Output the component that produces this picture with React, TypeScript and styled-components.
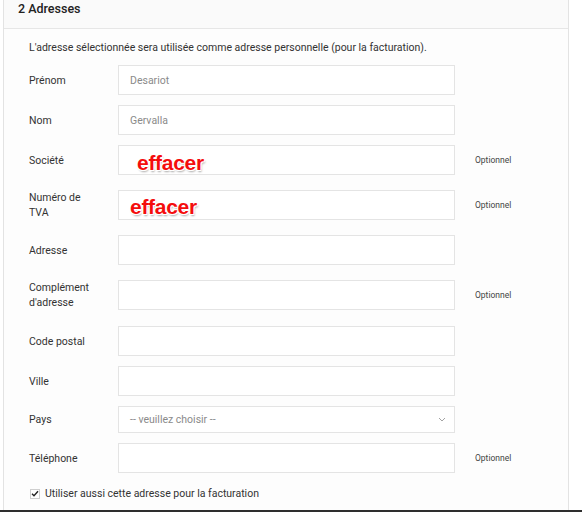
import React from "react";
import styled, { createGlobalStyle } from "styled-components";

const GlobalStyle = createGlobalStyle`
  html, body {
    margin: 0;
    padding: 0;
    background: #ffffff;
  }
  body {
    font-family: Roboto, "Liberation Sans", Arial, sans-serif;
    color: #333;
  }
`;

const Page = styled.div`
  width: 582px;
  height: 512px;
  display: flex;
  flex-direction: column;
  overflow: hidden;
`;

const Panel = styled.section`
  margin-left: 3px;
  width: 564px;
  height: 510px;
  border-left: 1px solid #e3e3e3;
  border-right: 1px solid #e3e3e3;
  background: #fdfdfd;
  display: flex;
  flex-direction: column;
`;

const Header = styled.div`
  height: 29px;
  box-sizing: border-box;
  padding: 2px 14px 0;
  border-bottom: 1px solid #e6e6e6;
  background: #fafafa;
  font-size: 12.5px;
  line-height: 13px;
  font-weight: 500;
  color: #222;
`;

const Body = styled.div`
  padding: 12px 0 0 25px;
  display: flex;
  flex-direction: column;
`;

const Intro = styled.p`
  margin: 0 0 10px;
  font-size: 10.5px;
  line-height: 14px;
  color: #333;
`;

const Row = styled.div<{ $tall?: boolean }>`
  display: flex;
  align-items: center;
  margin-bottom: ${(p) => (p.$tall ? 11 : 10)}px;
`;

const Label = styled.label`
  width: 89px;
  padding: 5px 0;
  font-size: 10.5px;
  line-height: 15px;
  color: #333;
`;

const Field = styled.div<{ $h?: number }>`
  position: relative;
  width: 337px;
  height: ${(p) => p.$h ?? 30}px;
  box-sizing: border-box;
  border: 1px solid #e4e4e4;
  background: #fff;
  display: flex;
  align-items: center;
  padding: 0 11px;
  font-size: 10.5px;
  color: #8a8a8a;
`;

const Chevron = styled.svg`
  margin-left: auto;
  margin-right: -3px;
`;

const Optional = styled.span`
  margin-left: 20px;
  font-size: 8.5px;
  color: #444;
`;

const Scribble = styled.span<{ $x: number; $dy: number }>`
  position: absolute;
  left: ${(p) => p.$x}px;
  top: 50%;
  transform: translateY(calc(-50% + ${(p) => p.$dy}px));
  font-family: "Liberation Sans", Arial, sans-serif;
  font-weight: 700;
  font-size: 21px;
  line-height: 22px;
  color: #f40d0d;
  letter-spacing: -0.3px;
  text-shadow: 1px 1px 0 #fff, -1px -1px 0 #fff, 1px -1px 0 #fff,
    -1px 1px 0 #fff, 1px 2px 2px rgba(0, 0, 0, 0.35);
`;

const CheckRow = styled.label`
  display: flex;
  align-items: center;
  gap: 5px;
  margin-top: 4px;
  margin-left: 1px;
  font-size: 10.5px;
  color: #333;
`;

const Box = styled.span`
  width: 10px;
  height: 10px;
  box-sizing: border-box;
  border: 1px solid #cfcfcf;
  background: #fff;
  display: flex;
  align-items: center;
  justify-content: center;
`;

const BottomBar = styled.div`
  height: 2px;
  background: #2e2e2e;
`;

type FieldDef = {
  label: React.ReactNode;
  value?: string;
  optional?: boolean;
  tall?: boolean;
  scribble?: [number, number];
};

const fields: FieldDef[] = [
  { label: "Prénom", value: "Desariot" },
  { label: "Nom", value: "Gervalla" },
  { label: "Société", optional: true, scribble: [18, 3] },
  {
    label: (
      <>
        Numéro de
        <br />
        TVA
      </>
    ),
    optional: true,
    scribble: [11, 2],
  },
  { label: "Adresse" },
  {
    label: (
      <>
        Complément
        <br />
        d'adresse
      </>
    ),
    optional: true,
    tall: true,
  },
  { label: "Code postal" },
  { label: "Ville" },
];

export default function App() {
  return (
    <Page>
      <GlobalStyle />
      <Panel>
        <Header>2 Adresses</Header>
        <Body>
          <Intro>
            L'adresse sélectionnée sera utilisée comme adresse personnelle (pour
            la facturation).
          </Intro>
          {fields.map((f, i) => (
            <Row key={i} $tall={f.tall}>
              <Label>{f.label}</Label>
              <Field>
                {f.value}
                {f.scribble && (
                  <Scribble $x={f.scribble[0]} $dy={f.scribble[1]}>
                    effacer
                  </Scribble>
                )}
              </Field>
              {f.optional && <Optional>Optionnel</Optional>}
            </Row>
          ))}
          <Row>
            <Label>Pays</Label>
            <Field $h={27}>
              -- veuillez choisir --
              <Chevron width="8" height="5" viewBox="0 0 8 5">
                <path d="M1 1l3 3 3-3" fill="none" stroke="#999" strokeWidth="0.9" />
              </Chevron>
            </Field>
          </Row>
          <Row>
            <Label>Téléphone</Label>
            <Field />
            <Optional>Optionnel</Optional>
          </Row>
          <CheckRow>
            <Box>
              <svg width="8" height="7" viewBox="0 0 8 7">
                <path d="M1 3.8l2 2 4-4.5" fill="none" stroke="#222" strokeWidth="1.4" />
              </svg>
            </Box>
            Utiliser aussi cette adresse pour la facturation
          </CheckRow>
        </Body>
      </Panel>
      <BottomBar />
    </Page>
  );
}
